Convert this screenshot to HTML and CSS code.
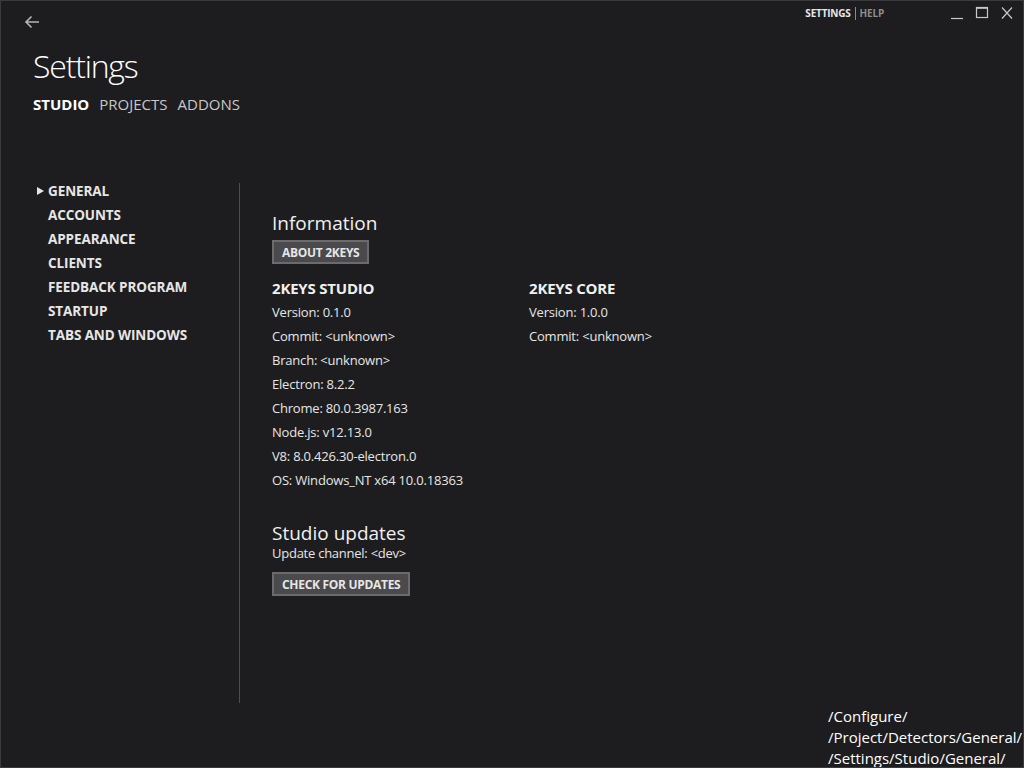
FILE: index.html
```html
<!DOCTYPE html>
<html>
<head>
<meta charset="utf-8">
<link rel="stylesheet" href="styles.css">
</head>
<body>
<div class="window">
  <header class="titlebar">
    <button class="back" aria-label="Back">
      <svg width="16" height="14" viewBox="0 0 16 14"><path d="M15 7H2M7.5 1.5L2 7l5.5 5.5" fill="none" stroke="#b4b4b4" stroke-width="1.6"/></svg>
    </button>
    <div class="top-right">
      <nav class="top-links"><span class="active">SETTINGS</span><span class="sep"></span><span>HELP</span></nav>
      <div class="win-controls">
        <svg width="14" height="14" viewBox="0 0 14 14"><path d="M1 12.5h12" stroke="#c8c8c8" stroke-width="1.2"/></svg>
        <svg width="14" height="14" viewBox="0 0 14 14"><rect x="1.5" y="1.5" width="11" height="10" fill="none" stroke="#c8c8c8" stroke-width="1.2"/><path d="M1.5 2.2h11" stroke="#c8c8c8" stroke-width="1.2"/></svg>
        <svg width="14" height="14" viewBox="0 0 14 14"><path d="M2 1.5l10 11M12 1.5l-10 11" stroke="#c8c8c8" stroke-width="1.2"/></svg>
      </div>
    </div>
  </header>
  <h1 class="title">Settings</h1>
  <nav class="tabs">
    <span class="tab active">STUDIO</span>
    <span class="tab">PROJECTS</span>
    <span class="tab">ADDONS</span>
  </nav>
  <div class="body">
    <aside class="sidebar">
      <ul>
        <li class="selected">GENERAL</li>
        <li>ACCOUNTS</li>
        <li>APPEARANCE</li>
        <li>CLIENTS</li>
        <li>FEEDBACK PROGRAM</li>
        <li>STARTUP</li>
        <li>TABS AND WINDOWS</li>
      </ul>
    </aside>
    <main class="content">
      <h2>Information</h2>
      <button class="btn">ABOUT 2KEYS</button>
      <div class="cols">
        <section class="col">
          <h3>2KEYS STUDIO</h3>
          <p>Version: 0.1.0</p>
          <p>Commit: &lt;unknown&gt;</p>
          <p>Branch: &lt;unknown&gt;</p>
          <p>Electron: 8.2.2</p>
          <p>Chrome: 80.0.3987.163</p>
          <p>Node.js: v12.13.0</p>
          <p>V8: 8.0.426.30-electron.0</p>
          <p>OS: Windows_NT x64 10.0.18363</p>
        </section>
        <section class="col">
          <h3>2KEYS CORE</h3>
          <p>Version: 1.0.0</p>
          <p>Commit: &lt;unknown&gt;</p>
        </section>
      </div>
      <h2 class="updates">Studio updates</h2>
      <p class="channel">Update channel: &lt;dev&gt;</p>
      <button class="btn">CHECK FOR UPDATES</button>
    </main>
  </div>
  <div class="routes">
    <div>/Configure/</div>
    <div>/Project/Detectors/General/</div>
    <div>/Settings/Studio/General/</div>
  </div>
</div>
</body>
</html>
```

FILE: styles.css
```css
* { box-sizing: border-box; }
html, body { margin: 0; padding: 0; }
body {
  background: #1d1d1f;
  font-family: "Open Sans", "Noto Sans", sans-serif;
  color: #eeeeee;
}
.window {
  position: relative;
  width: 1024px;
  height: 768px;
  border: 1px solid #3b3b3d;
  background: #1d1d1f;
  overflow: hidden;
}
.titlebar {
  display: flex;
  justify-content: space-between;
  height: 40px;
}
.back {
  background: none;
  border: 0;
  padding: 0;
  margin: 14px 0 0 23px;
  width: 16px;
  height: 16px;
  display: flex;
}
.top-right {
  display: flex;
  align-items: flex-start;
}
.top-links {
  display: flex;
  align-items: center;
  font-size: 10px;
  font-weight: 700;
  letter-spacing: -0.2px;
  color: #8c8c8c;
  margin-top: 5px;
  height: 14px;
}
.top-links .active { color: #e8e8e8; }
.sep {
  width: 1px;
  height: 13px;
  background: #8c8c8c;
  margin: 0 4px;
}
.win-controls {
  display: flex;
  gap: 11px;
  margin: 5px 9px 0 66px;
}
.title {
  margin: 5px 0 0 32px;
  font-size: 32px;
  font-weight: 300;
  line-height: 40px;
  color: #ffffff;
  letter-spacing: -1.2px;
}
.tabs {
  display: flex;
  gap: 10px;
  margin: 7px 0 0 32px;
  font-size: 15px;
  line-height: 22px;
}
.tab { color: #c8c8c8; font-weight: 400; }
.tab.active { color: #ffffff; font-weight: 700; }
.body {
  display: flex;
  margin-top: 68px;
}
.sidebar {
  width: 207px;
  height: 520px;
  border-right: 1px solid #4e4e50;
  margin-left: 32px;
}
.sidebar ul {
  list-style: none;
  margin: -4px 0 0;
  padding: 0;
}
.sidebar li {
  position: relative;
  padding-left: 15px;
  font-size: 13.5px;
  font-weight: 700;
  line-height: 24px;
  color: #e6e6e6;
  letter-spacing: -0.1px;
}
.sidebar li.selected::before {
  content: "";
  position: absolute;
  left: 4px;
  top: 8px;
  border-left: 7px solid #e6e6e6;
  border-top: 4px solid transparent;
  border-bottom: 4px solid transparent;
}
.content {
  padding: 27px 0 0 32px;
}
h2 {
  margin: 0;
  font-size: 19px;
  font-weight: 400;
  line-height: 26px;
  color: #f0f0f0;
}
.btn {
  display: block;
  background: #4a4a4c;
  border: 2px solid #6b6b6d;
  color: #e6e6e6;
  font-family: inherit;
  font-size: 12px;
  font-weight: 700;
  letter-spacing: -0.3px;
  height: 24px;
  padding: 0 8px;
  line-height: 19px;
}
.content > .btn:first-of-type { margin-top: 4px; }
.cols {
  display: flex;
  margin-top: 12px;
}
.col { width: 257px; }
h3 {
  margin: 0;
  font-size: 15px;
  font-weight: 700;
  line-height: 24px;
  color: #f0f0f0;
  letter-spacing: -0.2px;
}
.col p {
  margin: 0;
  font-size: 13px;
  line-height: 24px;
  color: #e6e6e6;
  letter-spacing: -0.2px;
}
.updates { margin-top: 28px; }
.channel {
  margin: -3px 0 9px;
  font-size: 13px;
  line-height: 20px;
  color: #e6e6e6;
  letter-spacing: -0.25px;
}
.routes {
  position: absolute;
  left: 827px;
  top: 705px;
  font-size: 15px;
  line-height: 21px;
  color: #ffffff;
  white-space: nowrap;
  letter-spacing: 0;
}
```
